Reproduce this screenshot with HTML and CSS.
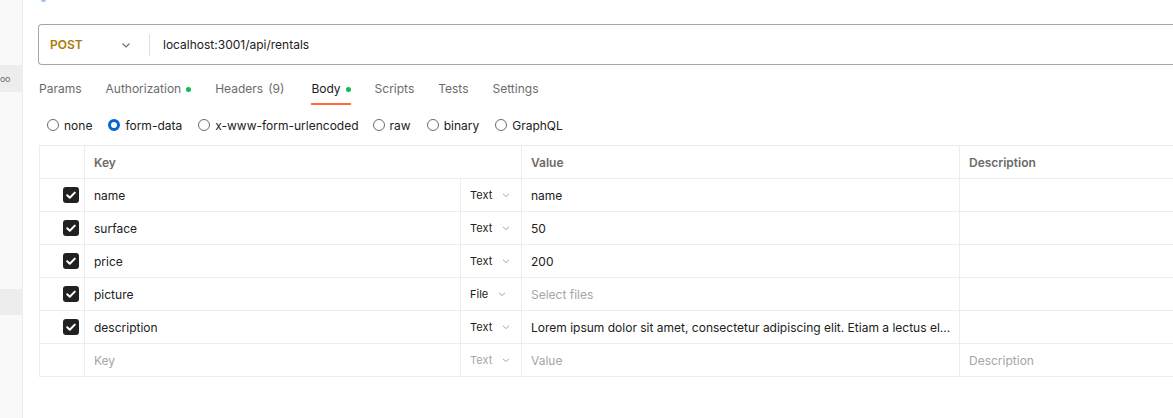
FILE: index.html
```html
<!DOCTYPE html>
<html>
<head>
<meta charset="utf-8">
<link rel="stylesheet" href="styles.css">
</head>
<body>
<div class="app">
  <aside class="sidebar">
    <div class="side-item side-item-a"><span class="side-ellipsis">oo</span></div>
    <div class="side-item side-item-b"></div>
  </aside>
  <main class="main">
    <div class="crumb"></div>
    <div class="urlbar">
      <div class="method">
        <span class="method-name">POST</span>
        <svg class="chev" width="10" height="10" viewBox="0 0 10 10"><path d="M1.5 3.5 L5 7 L8.5 3.5" fill="none" stroke="#6b6b6b" stroke-width="1.1"/></svg>
      </div>
      <div class="divider"></div>
      <div class="url">localhost:3001/api/rentals</div>
    </div>
    <nav class="tabs">
      <div class="tab">Params</div>
      <div class="tab">Authorization<span class="dot"></span></div>
      <div class="tab">Headers<span class="count">(9)</span></div>
      <div class="tab active">Body<span class="dot"></span></div>
      <div class="tab">Scripts</div>
      <div class="tab">Tests</div>
      <div class="tab">Settings</div>
    </nav>
    <div class="radios">
      <label class="radio"><span class="circle"></span>none</label>
      <label class="radio"><span class="circle on"></span>form-data</label>
      <label class="radio radio-long"><span class="circle"></span>x-www-form-urlencoded</label>
      <label class="radio"><span class="circle"></span>raw</label>
      <label class="radio"><span class="circle"></span>binary</label>
      <label class="radio"><span class="circle"></span>GraphQL</label>
    </div>
    <div class="table">
      <div class="row head">
        <div class="cell c-check"></div>
        <div class="cell c-key">Key</div>
        <div class="cell c-type"></div>
        <div class="cell c-val">Value</div>
        <div class="cell c-desc">Description</div>
      </div>
      <div class="row">
        <div class="cell c-check"><span class="cb"><svg width="16" height="16" viewBox="0 0 16 16"><path d="M4.2 8.3 L6.8 10.8 L11.8 5.6" fill="none" stroke="#fff" stroke-width="2" stroke-linecap="round" stroke-linejoin="round"/></svg></span></div>
        <div class="cell c-key">name</div>
        <div class="cell c-type">Text<svg class="tchev" width="10" height="10" viewBox="0 0 10 10"><path d="M2 3.8 L5 6.6 L8 3.8" fill="none" stroke="#a6a6a6" stroke-width="1"/></svg></div>
        <div class="cell c-val">name</div>
        <div class="cell c-desc"></div>
      </div>
      <div class="row">
        <div class="cell c-check"><span class="cb"><svg width="16" height="16" viewBox="0 0 16 16"><path d="M4.2 8.3 L6.8 10.8 L11.8 5.6" fill="none" stroke="#fff" stroke-width="2" stroke-linecap="round" stroke-linejoin="round"/></svg></span></div>
        <div class="cell c-key">surface</div>
        <div class="cell c-type">Text<svg class="tchev" width="10" height="10" viewBox="0 0 10 10"><path d="M2 3.8 L5 6.6 L8 3.8" fill="none" stroke="#a6a6a6" stroke-width="1"/></svg></div>
        <div class="cell c-val">50</div>
        <div class="cell c-desc"></div>
      </div>
      <div class="row">
        <div class="cell c-check"><span class="cb"><svg width="16" height="16" viewBox="0 0 16 16"><path d="M4.2 8.3 L6.8 10.8 L11.8 5.6" fill="none" stroke="#fff" stroke-width="2" stroke-linecap="round" stroke-linejoin="round"/></svg></span></div>
        <div class="cell c-key">price</div>
        <div class="cell c-type">Text<svg class="tchev" width="10" height="10" viewBox="0 0 10 10"><path d="M2 3.8 L5 6.6 L8 3.8" fill="none" stroke="#a6a6a6" stroke-width="1"/></svg></div>
        <div class="cell c-val">200</div>
        <div class="cell c-desc"></div>
      </div>
      <div class="row">
        <div class="cell c-check"><span class="cb"><svg width="16" height="16" viewBox="0 0 16 16"><path d="M4.2 8.3 L6.8 10.8 L11.8 5.6" fill="none" stroke="#fff" stroke-width="2" stroke-linecap="round" stroke-linejoin="round"/></svg></span></div>
        <div class="cell c-key">picture</div>
        <div class="cell c-type">File<svg class="tchev" width="10" height="10" viewBox="0 0 10 10"><path d="M2 3.8 L5 6.6 L8 3.8" fill="none" stroke="#a6a6a6" stroke-width="1"/></svg></div>
        <div class="cell c-val ph">Select files</div>
        <div class="cell c-desc"></div>
      </div>
      <div class="row">
        <div class="cell c-check"><span class="cb"><svg width="16" height="16" viewBox="0 0 16 16"><path d="M4.2 8.3 L6.8 10.8 L11.8 5.6" fill="none" stroke="#fff" stroke-width="2" stroke-linecap="round" stroke-linejoin="round"/></svg></span></div>
        <div class="cell c-key">description</div>
        <div class="cell c-type">Text<svg class="tchev" width="10" height="10" viewBox="0 0 10 10"><path d="M2 3.8 L5 6.6 L8 3.8" fill="none" stroke="#a6a6a6" stroke-width="1"/></svg></div>
        <div class="cell c-val"><span class="trunc">Lorem ipsum dolor sit amet, consectetur adipiscing elit. Etiam a lectus el...</span></div>
        <div class="cell c-desc"></div>
      </div>
      <div class="row">
        <div class="cell c-check"></div>
        <div class="cell c-key ph">Key</div>
        <div class="cell c-type ph">Text<svg class="tchev" width="10" height="10" viewBox="0 0 10 10"><path d="M2 3.8 L5 6.6 L8 3.8" fill="none" stroke="#a6a6a6" stroke-width="1"/></svg></div>
        <div class="cell c-val ph">Value</div>
        <div class="cell c-desc ph">Description</div>
      </div>
    </div>
  </main>
</div>
</body>
</html>
```

FILE: styles.css
```css
* { box-sizing: border-box; }
html, body { margin: 0; padding: 0; }
body {
  width: 1173px;
  height: 418px;
  overflow: hidden;
  background: #ffffff;
  font-family: Inter, "Noto Sans", sans-serif;
  color: #212121;
}
.app {
  display: flex;
  height: 418px;
}
.sidebar {
  width: 23px;
  flex: 0 0 23px;
  background: #f9f9f9;
  border-right: 1px solid #ededed;
  display: flex;
  flex-direction: column;
}
.side-item {
  height: 27px;
  background: #ededed;
  display: flex;
  align-items: center;
}
.side-item-a { margin-top: 65px; }
.side-item-b { margin-top: 197px; height: 26px; }
.side-ellipsis {
  font-size: 9px;
  color: #6b6b6b;
  letter-spacing: -0.5px;
  line-height: 10px;
}
.main {
  flex: 1;
  min-width: 0;
  padding-left: 15px;
  overflow: hidden;
}
.crumb {
  width: 5px;
  height: 2px;
  margin-left: 3px;
  background: #9ec5ee;
  border-radius: 0 0 2px 2px;
}
.urlbar {
  margin-top: 22px;
  height: 41px;
  border: 1px solid #a6a6a6;
  border-right: none;
  border-radius: 4px 0 0 4px;
  display: flex;
  align-items: center;
  margin-right: -2px;
}
.method {
  width: 110px;
  display: flex;
  align-items: center;
  padding-left: 11px;
}
.method-name {
  font-size: 12px;
  font-weight: 600;
  color: #ad7a03;
  width: 71px;
}
.chev { display: block; }
.divider {
  width: 1px;
  height: 22px;
  background: #e0e0e0;
}
.url {
  padding-left: 13px;
  font-size: 12px;
  color: #212121;
}
.tabs {
  display: flex;
  gap: 24px;
  padding-left: 1px;
  height: 40px;
}
.tab {
  font-size: 12px;
  color: #6b6b6b;
  padding-top: 16px;
  line-height: 16px;
  height: 40px;
  display: flex;
  align-items: flex-start;
  border-bottom: 2px solid transparent;
}
.tab.active {
  color: #212121;
  border-bottom-color: #ff6c37;
}
.count {
  margin-left: 5px;
  margin-right: 3px;
}
.dot {
  width: 5px;
  height: 5px;
  border-radius: 50%;
  background: #0cbb52;
  margin-left: 5px;
  margin-top: 6px;
}
.radios {
  display: flex;
  align-items: center;
  gap: 16px;
  height: 38px;
  padding-left: 9px;
  padding-top: 2px;
}
.radio {
  display: flex;
  align-items: center;
  gap: 5px;
  font-size: 12px;
  color: #212121;
}
.radio-long { margin-right: -2px; }
.circle {
  width: 12px;
  height: 12px;
  border-radius: 50%;
  border: 1px solid #6b6b6b;
  background: #fff;
}
.circle.on {
  border: 3px solid #0265d2;
}
.table {
  width: 1160px;
  margin-top: 2px;
  margin-left: 1px;
  border-top: 1px solid #ededed;
  border-left: 1px solid #ededed;
}
.row {
  display: grid;
  grid-template-columns: 45px 376px 61px 438px 1fr;
  height: 33px;
  border-bottom: 1px solid #ededed;
}
.cell {
  display: flex;
  align-items: center;
  border-right: 1px solid #ededed;
  font-size: 12px;
  color: #212121;
  padding-left: 9px;
  white-space: nowrap;
  overflow: hidden;
}
.head .cell {
  font-weight: 600;
  color: #6b6b6b;
}
.c-check {
  justify-content: flex-end;
  padding-right: 5px;
  padding-left: 0;
}
.c-type { font-size: 11px; }
.head .c-key { border-right: none; }
.tchev { margin-left: 9px; }
.cb {
  width: 16px;
  height: 16px;
  border-radius: 3px;
  background: #212121;
  display: block;
}
.cb svg { display: block; }
.ph { color: #a6a6a6; }
.trunc { overflow: hidden; text-overflow: ellipsis; }
```
